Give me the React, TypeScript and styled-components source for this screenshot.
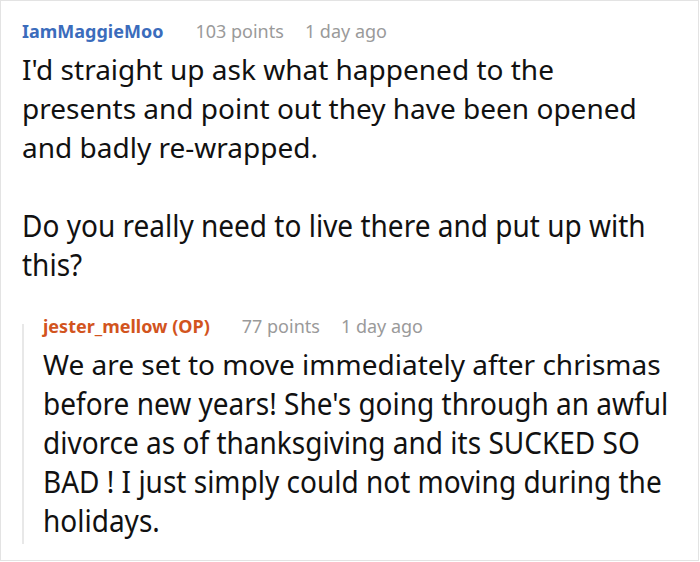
import React from "react";
import styled, { createGlobalStyle } from "styled-components";

const Global = createGlobalStyle`
  html, body { margin: 0; padding: 0; background: #fff; }
  body { font-family: "Noto Sans", "Open Sans", sans-serif; }
`;

const Card = styled.div`
  box-sizing: border-box;
  width: 699px;
  height: 561px;
  border: 1px solid #e3e3e3;
  background: #fff;
  padding: 17px 0 0 21px;
  overflow: hidden;
`;

const Meta = styled.div`
  display: flex;
  align-items: baseline;
  gap: 21px;
  font-size: 18px;
  line-height: 26px;
  height: 26px;
`;

const Author = styled.span<{ $color: string }>`
  font-weight: 700;
  color: ${(p) => p.$color};
  margin-right: 11px;
`;

const Info = styled.span`
  color: #9a9a9a;
`;

const Body = styled.div`
  font-size: 28px;
  line-height: 39px;
  color: #111;
  margin-top: 6px;
`;

const Line = styled.div<{ $tall?: boolean }>`
  white-space: nowrap;
  height: 39px;
  transform: ${(p) => (p.$tall ? "scaleY(1.1)" : "none")};
  transform-origin: center;
`;

const Reply = styled.div`
  position: relative;
  margin-top: 29px;
  padding-left: 21px;

  &::before {
    content: "";
    position: absolute;
    left: 0;
    top: 11px;
    bottom: -4px;
    width: 2px;
    background: #e8e8e8;
  }
`;

export default function App() {
  return (
    <>
      <Global />
      <Card>
        <Meta>
          <Author $color="#3b6cbc">IamMaggieMoo</Author>
          <Info>103 points</Info>
          <Info>1 day ago</Info>
        </Meta>
        <Body>
          <Line>I'd straight up ask what happened to the</Line>
          <Line>presents and point out they have been opened</Line>
          <Line>and badly re-wrapped.</Line>
          <Line />
          <Line $tall>Do you really need to live there and put up with</Line>
          <Line $tall>this?</Line>
        </Body>
        <Reply>
          <Meta>
            <Author $color="#d2541e">jester_mellow (OP)</Author>
            <Info>77 points</Info>
            <Info>1 day ago</Info>
          </Meta>
          <Body>
            <Line>We are set to move immediately after chrismas</Line>
            <Line $tall>before new years! She's going through an awful</Line>
            <Line $tall>divorce as of thanksgiving and its SUCKED SO</Line>
            <Line $tall>BAD ! I just simply could not moving during the</Line>
            <Line $tall>holidays.</Line>
          </Body>
        </Reply>
      </Card>
    </>
  );
}
